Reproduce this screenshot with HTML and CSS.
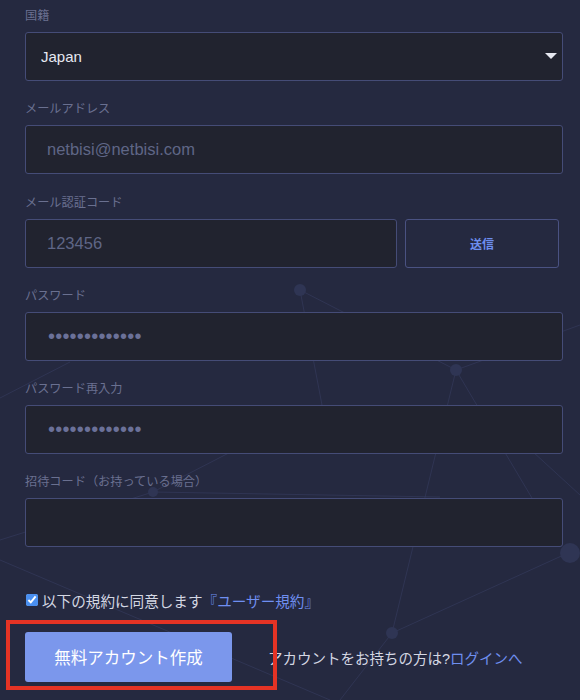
FILE: index.html
```html
<!DOCTYPE html>
<html lang="ja">
<head>
    <meta charset="UTF-8">
    <meta name="viewport" content="width=device-width, initial-scale=1.0">
    <title>新規登録</title>
    <link rel="stylesheet" href="styles.css">
</head>
<body>
    <svg class="network" width="580" height="700" viewBox="0 0 580 700">
        <g class="links">
            <line x1="300" y1="290" x2="456" y2="370"/>
            <line x1="300" y1="290" x2="322" y2="405"/>
            <line x1="322" y1="405" x2="153" y2="492"/>
            <line x1="456" y1="370" x2="392" y2="633"/>
            <line x1="456" y1="370" x2="580" y2="325"/>
            <line x1="456" y1="370" x2="545" y2="520"/>
            <line x1="520" y1="440" x2="580" y2="495"/>
            <line x1="153" y1="492" x2="440" y2="497"/>
            <line x1="0" y1="560" x2="330" y2="700"/>
            <line x1="0" y1="398" x2="70" y2="362"/>
            <line x1="392" y1="633" x2="340" y2="700"/>
            <line x1="392" y1="633" x2="568" y2="553"/>
            <line x1="153" y1="492" x2="0" y2="540"/>
        </g>
        <g class="nodes">
            <circle cx="300" cy="290" r="6"/>
            <circle cx="456" cy="370" r="6"/>
            <circle cx="153" cy="492" r="5"/>
            <circle cx="392" cy="633" r="6"/>
            <circle cx="570" cy="553" r="10"/>
        </g>
    </svg>

    <form class="signup">
        <div class="field">
            <label>国籍</label>
            <div class="select-wrap">
                <select class="input select">
                    <option>Japan</option>
                </select>
                <span class="caret"></span>
            </div>
        </div>

        <div class="field">
            <label>メールアドレス</label>
            <input class="input" type="text" value="netbisi@netbisi.com">
        </div>

        <div class="field">
            <label>メール認証コード</label>
            <div class="code-row">
                <input class="input" type="text" value="123456">
                <button type="button" class="send">送信</button>
            </div>
        </div>

        <div class="field">
            <label>パスワード</label>
            <input class="input password" type="password" value="abcdefghijklm">
        </div>

        <div class="field">
            <label>パスワード再入力</label>
            <input class="input password" type="password" value="abcdefghijklm">
        </div>

        <div class="field">
            <label>招待コード（お持っている場合）</label>
            <input class="input" type="text" value="">
        </div>

        <div class="agree">
            <input type="checkbox" checked>
            <span>以下の規約に同意します</span><a href="#">『ユーザー規約』</a>
        </div>

        <div class="actions">
            <button type="button" class="submit">無料アカウント作成</button>
            <p class="login">アカウントをお持ちの方は?<a href="#">ログインへ</a></p>
        </div>
    </form>

    <div class="highlight"></div>
</body>
</html>
```

FILE: styles.css
```css
body {
    margin: 0;
    height: 700px;
    overflow: hidden;
    position: relative;
    background-color: #252940;
    font-family: "Liberation Sans", "Noto Sans CJK JP", sans-serif;
    color: #d4d7e3;
}
.network {
    position: absolute;
    left: 0;
    top: 0;
}
.network .links line {
    stroke: #3a4066;
    stroke-width: 1;
    opacity: 0.5;
}
.network .nodes circle {
    fill: #2f3554;
}
.signup {
    position: relative;
    z-index: 1;
    padding: 7px 17px 0 25px;
}
.field {
    margin-bottom: 19.3px;
}
.field label {
    display: block;
    font-size: 12.2px;
    line-height: 18px;
    color: #6a7090;
    margin-bottom: 7px;
}
.input {
    display: block;
    width: 100%;
    height: 49px;
    box-sizing: border-box;
    margin: 0;
    padding: 0 21px;
    background: #21232f;
    border: 1px solid #454c77;
    border-radius: 3px;
    font-family: "Liberation Sans", "Noto Sans CJK JP", sans-serif;
    font-size: 16.5px;
    color: #5f6686;
    outline: none;
}
.password {
    padding-left: 22px;
    font-size: 20px;
    letter-spacing: 0.2px;
    color: #6b7199;
}
.select-wrap {
    position: relative;
}
.select {
    appearance: none;
    -webkit-appearance: none;
    padding-left: 15px;
    font-size: 15px;
    color: #e6e8f1;
}
.caret {
    position: absolute;
    right: 6px;
    top: 21px;
    width: 0;
    height: 0;
    border-left: 6px solid transparent;
    border-right: 6px solid transparent;
    border-top: 6px solid #e6e8f1;
}
.code-row {
    display: flex;
    gap: 8px;
}
.code-row .input {
    flex: 1;
}
.send {
    width: 154px;
    height: 49px;
    margin-right: 4px;
    background: transparent;
    border: 1px solid #4a5282;
    border-radius: 3px;
    font-family: "Liberation Sans", "Noto Sans CJK JP", sans-serif;
    font-size: 12px;
    font-weight: bold;
    color: #6d8ef0;
}
.agree {
    display: flex;
    align-items: center;
    margin-top: 43px;
    height: 20px;
    font-size: 14.6px;
    color: #d4d7e3;
}
.agree input {
    width: 12px;
    height: 12px;
    margin: 0 4px 0 1px;
    accent-color: #4a8ff0;
}
.agree a,
.login a {
    color: #6f8ff0;
    text-decoration: none;
}
.actions {
    display: flex;
    align-items: center;
    margin-top: 22px;
}
.submit {
    width: 207px;
    height: 50px;
    background: #7b97ec;
    border: none;
    border-radius: 3px;
    font-family: "Liberation Sans", "Noto Sans CJK JP", sans-serif;
    font-size: 16.5px;
    color: #ffffff;
}
.login {
    margin: 0 0 0 36px;
    font-size: 14.5px;
    color: #d4d7e3;
}
.highlight {
    position: absolute;
    z-index: 2;
    left: 6px;
    top: 620px;
    width: 271px;
    height: 70px;
    box-sizing: border-box;
    border: 4px solid #e53325;
}
```
